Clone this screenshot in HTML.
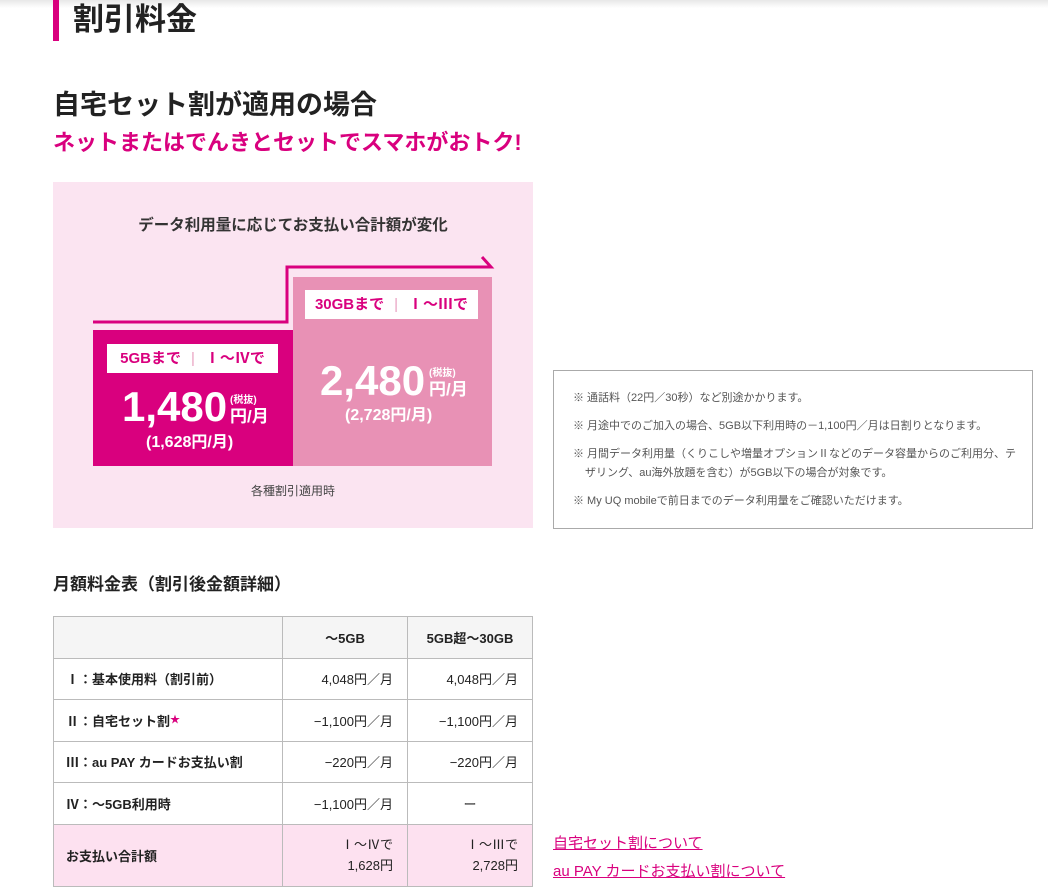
<!DOCTYPE html>
<html><head><meta charset="utf-8"><style>
*{margin:0;padding:0;box-sizing:border-box}
body{width:1048px;height:886px;position:relative;background:#fff;font-family:"Liberation Sans","Noto Sans CJK JP",sans-serif;color:#222;overflow:hidden}
.a{position:absolute;white-space:nowrap}
.top{position:absolute;left:0;top:0;width:1048px;height:8px;background:linear-gradient(#e8e8e8,#fff)}
table{position:absolute;left:53px;top:616px;width:480px;border-collapse:collapse;font-size:13px}
td,th{border:1px solid #bbb;height:41.5px;padding:0 12px}
th{background:#f5f5f5;font-weight:bold;text-align:center}
td.l{font-weight:bold;text-align:left;padding-left:12px}
td.r{text-align:right;padding-right:14px}
tr.p td{background:#fde1f0;height:62px}
.lab{position:absolute;background:#fff;color:#d9007e;font-weight:bold;font-size:15px;text-align:center;line-height:29px}
.sep{color:#e8a0c0;font-weight:normal;margin:0 10px}
.note{font-size:11px;color:#555;line-height:19px}
</style></head><body>
<div class="top"></div>
<div class="a" style="left:53px;top:0;width:6px;height:41px;background:#d9007e"></div>
<div class="a" style="left:73px;top:-2px;font-size:31px;font-weight:bold;line-height:44px">割引料金</div>
<div class="a" style="left:53px;top:86px;font-size:27px;font-weight:bold;line-height:38px">自宅セット割が適用の場合</div>
<div class="a" style="left:53px;top:128px;font-size:22px;font-weight:bold;color:#d9007e;line-height:30px">ネットまたはでんきとセットでスマホがおトク!</div>

<div class="a" style="left:53px;top:182px;width:480px;height:346px;background:#fbe4f1"></div>
<div class="a" style="left:53px;top:213px;width:480px;text-align:center;font-size:15.5px;font-weight:bold;color:#333">データ利用量に応じてお支払い合計額が変化</div>
<svg class="a" style="left:0;top:0" width="1048" height="886"><polyline points="93,322 287,322 287,267 491,267 482,257" fill="none" stroke="#d9007e" stroke-width="3"/></svg>
<div class="a" style="left:93px;top:330px;width:200px;height:136px;background:#d9007e"></div>
<div class="a" style="left:293px;top:277px;width:199px;height:189px;background:#e891b5"></div>
<div class="lab" style="left:107px;top:344px;width:171px">5GBまで<span class="sep">|</span>Ⅰ～Ⅳで</div>
<div class="lab" style="left:305px;top:290px;width:173px">30GBまで<span class="sep">|</span>Ⅰ～Ⅲで</div>
<div class="a" style="left:122px;top:382px;color:#fff;font-weight:bold;font-size:42px;line-height:50px">1,480</div>
<div class="a" style="left:230px;top:391px;color:#fff;font-weight:bold;font-size:10px">(税抜)</div>
<div class="a" style="left:230px;top:402px;color:#fff;font-weight:bold;font-size:17px">円/月</div>
<div class="a" style="left:146px;top:428px;color:#fff;font-weight:bold;font-size:16px">(1,628円/月)</div>
<div class="a" style="left:320px;top:356px;color:#fff;font-weight:bold;font-size:42px;line-height:50px">2,480</div>
<div class="a" style="left:429px;top:364px;color:#fff;font-weight:bold;font-size:10px">(税抜)</div>
<div class="a" style="left:429px;top:375px;color:#fff;font-weight:bold;font-size:17px">円/月</div>
<div class="a" style="left:345px;top:401px;color:#fff;font-weight:bold;font-size:16px">(2,728円/月)</div>
<div class="a" style="left:53px;top:482px;width:480px;text-align:center;font-size:12px;color:#444">各種割引適用時</div>

<div class="a" style="left:553px;top:370px;width:480px;height:159px;border:1px solid #aaa"></div>
<div class="a note" style="left:573px;top:389px">※ 通話料（22円／30秒）など別途かかります。</div>
<div class="a note" style="left:573px;top:417px">※ 月途中でのご加入の場合、5GB以下利用時の－1,100円／月は日割りとなります。</div>
<div class="a note" style="left:573px;top:445px">※ 月間データ利用量（くりこしや増量オプションⅡなどのデータ容量からのご利用分、テ</div>
<div class="a note" style="left:585px;top:464px">ザリング、au海外放題を含む）が5GB以下の場合が対象です。</div>
<div class="a note" style="left:573px;top:492px">※ My UQ mobileで前日までのデータ利用量をご確認いただけます。</div>

<div class="a" style="left:53px;top:570px;font-size:17px;font-weight:bold">月額料金表（割引後金額詳細）</div>
<table>
<tr><th style="width:229px"></th><th style="width:125px">～5GB</th><th>5GB超～30GB</th></tr>
<tr><td class="l">Ⅰ：基本使用料（割引前）</td><td class="r">4,048円／月</td><td class="r">4,048円／月</td></tr>
<tr><td class="l">Ⅱ：自宅セット割<span style="color:#d9007e;font-size:10px;vertical-align:top">★</span></td><td class="r">−1,100円／月</td><td class="r">−1,100円／月</td></tr>
<tr><td class="l">Ⅲ：au PAY カードお支払い割</td><td class="r">−220円／月</td><td class="r">−220円／月</td></tr>
<tr><td class="l">Ⅳ：～5GB利用時</td><td class="r">−1,100円／月</td><td style="text-align:center">ー</td></tr>
<tr class="p"><td class="l">お支払い合計額</td><td class="r" style="line-height:21px">Ⅰ～Ⅳで<br>1,628円</td><td class="r" style="line-height:21px">Ⅰ～Ⅲで<br>2,728円</td></tr>
</table>
<div class="a" style="left:553px;top:832px;font-size:15px;color:#d9007e;text-decoration:underline">自宅セット割について</div>
<div class="a" style="left:553px;top:860px;font-size:15px;color:#d9007e;text-decoration:underline">au PAY カードお支払い割について</div>
</body></html>
